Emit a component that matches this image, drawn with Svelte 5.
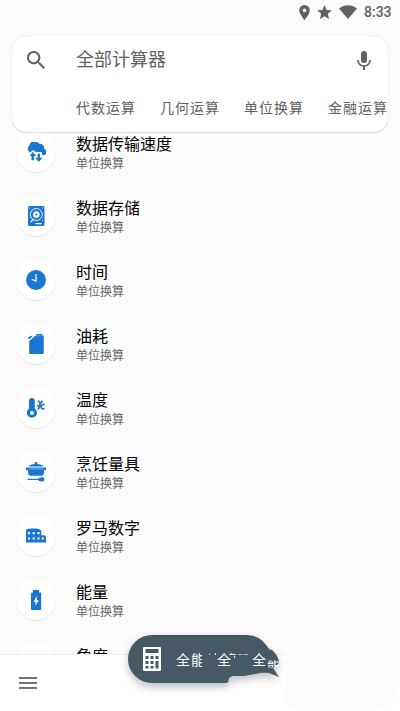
<script>
	const tabs = ['代数运算', '几何运算', '单位换算', '金融运算'];

	const items = [
		{ icon: 'cloud', name: '数据传输速度' },
		{ icon: 'disk', name: '数据存储' },
		{ icon: 'clock', name: '时间' },
		{ icon: 'fuel', name: '油耗' },
		{ icon: 'temp', name: '温度' },
		{ icon: 'pot', name: '烹饪量具' },
		{ icon: 'roman', name: '罗马数字' },
		{ icon: 'battery', name: '能量' },
		{ icon: 'angle', name: '角度' }
	];
</script>

<div class="screen">
	<header class="status">
		<svg class="pin" viewBox="5 2 14 20"><path d="M12 2a7 7 0 0 0-7 7c0 5.200 7 13 7 13s7-7.800 7-13a7 7 0 0 0-7-7Zm0 9.500a2.500 2.500 0 1 1 0-5 2.500 2.500 0 0 1 0 5Z" /></svg>
		<svg class="star" viewBox="2 2 20 19"><path d="m12 17.270 6.180 3.730-1.640-7.030L22 9.240l-7.190-.61L12 2 9.190 8.630 2 9.240l5.460 4.730L5.820 21Z" /></svg>
		<svg class="wifi" viewBox="0 0 18 14"><path d="M0 3.500C5-1 13-1 18 3.500L9 14Z" /></svg>
		<span>8:33</span>
	</header>

	<section class="search">
		<div class="field">
			<svg class="glass" viewBox="3 3 17.500 17.500"><path d="M15.500 14h-.79l-.28-.27A6.500 6.500 0 1 0 13.730 14.430l.27.28v.79l5 4.990L20.490 19Zm-6 0a4.500 4.500 0 1 1 0-9 4.500 4.500 0 0 1 0 9Z" /></svg>
			<span>全部计算器</span>
			<svg class="mic" viewBox="5 2 14 19"><path d="M12 14a3 3 0 0 0 3-3V5a3 3 0 0 0-6 0v6a3 3 0 0 0 3 3Zm5.300-3a5.300 5.300 0 0 1-10.600 0H5a7 7 0 0 0 6 6.720V21h2v-3.280A7 7 0 0 0 19 11Z" /></svg>
		</div>
		<nav class="tabs">
			{#each tabs as tab}
				<span>{tab}</span>
			{/each}
		</nav>
	</section>

	<main class="list">
		{#each items as item}
			<div class="row">
				<div class="badge">
					<svg viewBox="0 0 20 20">
						{#if item.icon === 'cloud'}
							<path d="M4.200 10.500A4 4 0 0 1 3.200 3.800 5.300 5.300 0 0 1 13 1.800a4.300 4.300 0 0 1 5 5 3.300 3.300 0 0 1 .5 6.200H16v-3h-6L7 7.900Z" />
							<path d="m6.800 10 3.400 4H8.100v4.200H5.500V14H3.400ZM11.600 11.800H14v4h2.500L12.800 20l-3.600-4.200h2.400Z" />
						{:else if item.icon === 'disk'}
							<rect x="2" y="0" width="16.500" height="20" rx="1.500" />
							<circle class="ring" cx="10.300" cy="8.500" r="6" />
							<circle class="hub" cx="10.300" cy="8.500" r="3.200" />
							<circle cx="10.300" cy="8.500" r="1.100" />
							<path class="arm" d="m4.800 16.200 2.600-3.400M9.500 17.600h6.200" />
							<path class="hole" d="M3.400 1.400h1v1h-1ZM16 1.400h1v1h-1ZM16 14h1v1h-1Z" />
						{:else if item.icon === 'clock'}
							<circle cx="10" cy="10" r="10" />
							<path class="hands" d="M10 4v7L5.600 9.200" />
						{:else if item.icon === 'fuel'}
							<path d="M3.200 7 9 2.100h1L10.600 0h5.300l.7 1.400h1.100V19q0 1-1 1H4.200q-1 0-1-1ZM1.800 4l3.200-2.600 1.200 1.300L3.200 5.300Z" />
							<path class="rim" d="M11 1.900h4.600" />
						{:else if item.icon === 'temp'}
							<path d="M3 2.800a2.900 2.900 0 0 1 5.800 0v7.600a5.100 5.100 0 1 1-5.800 0Z" />
							<circle class="hole" cx="5.900" cy="14.900" r="1.900" />
							<path class="line" d="m12 2.500 2.300 2.300L16.600 3M11 7.800h2.500l.8-3M18.600 6.500q-3.600-.8-3.600 2.500 0 2 3.500 1.800M12 11.500l1.500-2.500" />
						{:else if item.icon === 'pot'}
							<path d="M8.800 0h2.400v2q5 .2 6.400 2.600H2.400Q4 2.200 8.800 2ZM0 5.400h20v2.800h-2v2.500q0 3-3 3H5q-3 0-3-3V8.200H0Z" />
							<path d="M1.500 16.800H12q1.700-1.900 4.500-1.600 2 .5 2 2.300t-2 2.100q-2.500.2-4.500-1.500H1.500Z" />
							<path class="rim" d="M2.500 6.900h15" />
						{:else if item.icon === 'roman'}
							<path d="M0 5q0-2.400 5-2.400h5q4 .4 5.300 2.200v4.400h2.300q2.400.2 2.400 2v5.300H0Z" />
							<path class="windows" d="M2.900 6v2.300M7.700 6v2.300M12.500 6v2.300M2.900 11.500v2M7.700 11.500v2M12.500 11.500v2M16.800 11.500v2" />
						{:else if item.icon === 'battery'}
							<path d="M7 0h6v2.500h1.200q1 0 1 1V19q0 1-1 1H6q-1 0-1-1V3.500q0-1 1-1h1Z" />
							<path class="hole" d="m10.800 6-3.300 6h2v3.700l3.300-5.500h-2Z" />
						{:else}
							<path d="M11 1 19 20H2Z" />
						{/if}
					</svg>
				</div>
				<div class="text">
					<b>{item.name}</b>
					<small>单位换算</small>
				</div>
			</div>
		{/each}
	</main>

	<footer class="bottom">
		<svg viewBox="0 0 18 12"><path d="M0 0h18v2H0ZM0 5h18v2H0ZM0 10h18v2H0Z" /></svg>
	</footer>
	<div class="patch"></div>

	<svg class="fab" viewBox="118 625 172 76">
		<defs>
			<clipPath id="mid"><path d="M176 640h28v14h-2v14h-26Z" /></clipPath>
			<clipPath id="tops"><path d="M209 650h7v5h-7ZM229 650h7v8h-2v-3h-5ZM237 650h11v4.500h-11Z" /></clipPath>
			<clipPath id="tail"><path d="M267 660h12v7.500h-12Z" /></clipPath>
		</defs>
		<path class="shape" d="M152 635h95q12 0 20 11 2 4 5 4 5 4 7 11l-1 3-5 4 6 9-10-4q-6-1-14 1l-11 2h-12l-3 2-1 4.500q-2 .5-5 .5h-71a24 24 0 0 1 0-48Z" />
		<path class="calc" d="M143 648q0-1 1-1h16q1 0 1 1v22q0 1-1 1h-16q-1 0-1-1ZM145.500 649v4h13v-4ZM145.500 656v3h3v-3ZM150.500 656v3h3v-3ZM155.500 656v3h3v-3ZM145.500 661v3h3v-3ZM150.500 661v3h3v-3ZM155.500 661v7.500h3V661ZM145.500 666v2.500h3V666ZM150.500 666v2.500h3V666Z" />
		<text x="176" y="664.500" clip-path="url(#mid)">全能</text>
		<g clip-path="url(#tops)">
			<text x="206" y="664.500">计</text>
			<text x="223" y="664.500">算</text>
			<text x="236" y="664.500">器</text>
		</g>
		<text x="217" y="664.500">全</text>
		<text x="252" y="664.500">全</text>
		<text class="tiny" x="267" y="671" clip-path="url(#tail)">能</text>
	</svg>
</div>

<style>
	:global(body) { margin: 0; background: #fafafa; }

	.screen {
		position: relative;
		display: flex; flex-direction: column;
		width: 400px; height: 711px; overflow: hidden;
		background: #fbfbfb; color: #616161;
		font-family: Roboto, 'Noto Sans CJK SC', sans-serif;
	}
	svg { display: block; flex: none; fill: currentColor; }

	.status {
		display: flex; align-items: center; flex: none;
		height: 24px; box-sizing: border-box; padding: 0 8px 0 299px;
	}
	.status span { margin-left: 7px; font-size: 14px; font-weight: 500; line-height: 24px; }
	.pin { width: 11px; height: 15px; }
	.star { width: 15px; height: 14px; margin-left: 7px; }
	.wifi { width: 18px; height: 14px; margin-left: 7px; }

	.search {
		position: relative; z-index: 1; flex: none;
		box-sizing: border-box; width: 376px; height: 96px; margin: 12px 12px 0;
		overflow: hidden; border-radius: 14px;
		background: #fff; box-shadow: 0 0 1px rgba(0, 0, 0, 0.25), 0 1px 1px rgba(0, 0, 0, 0.1);
	}
	.field { display: flex; align-items: center; height: 48px; padding: 0 17px 0 15px; }
	.field span { flex: 1; margin-left: 31px; font-size: 18px; line-height: 24px; }
	.glass { width: 18px; height: 18px; }
	.mic { width: 14px; height: 19px; margin-top: 1px; }
	.tabs { display: flex; gap: 24px; height: 48px; padding-left: 64px; }
	.tabs span { flex: none; font-size: 14px; line-height: 48px; letter-spacing: 1px; }

	.list { flex: 1; min-height: 0; overflow: hidden; margin-top: -12px; }
	.row { display: flex; height: 64px; padding: 12px 16px 0; box-sizing: border-box; }
	.badge {
		display: grid; place-items: center;
		width: 40px; height: 40px; border-radius: 50%;
		background: #fff; color: #1976d2; box-shadow: 0 1px 1px rgba(0, 0, 0, 0.08);
	}
	.badge svg { width: 20px; height: 20px; }
	.text { display: flex; flex-direction: column; margin-left: 20px; }
	.text b { margin-top: 2px; color: #000; font-size: 16px; font-weight: 400; line-height: 22px; }
	.text small { color: #666; font-size: 12px; line-height: 16px; }
	.ring, .hands, .arm, .line, .windows, .rim { fill: none; stroke: #fff; }
	.ring { stroke-width: 0.9; }
	.hub { fill: #fff; }
	.hands, .arm { stroke-width: 1.2; }
	.line { stroke: #1976d2; stroke-width: 1.7; }
	.windows { stroke-width: 2; }
	.rim { stroke: #90bdea; stroke-width: 0.8; }
	.hole { fill: #fff; }

	.bottom {
		display: flex; align-items: center; flex: none;
		box-sizing: border-box; height: 57px; padding-left: 19px;
		border-top: 1px solid #f0f0f0; background: #fff; color: #757575;
	}
	.bottom svg { width: 18px; height: 12px; }
	.patch {
		position: absolute; left: 285px; top: 640px; width: 115px; height: 71px;
		border-radius: 0 0 32px 14px; background: #fbfbfb;
	}

	.fab {
		position: absolute; left: 118px; top: 625px;
		width: 172px; height: 76px; color: #fff;
		font-size: 14px; letter-spacing: 1px;
	}
	.fab .shape { fill: #455a64; filter: drop-shadow(0 4px 4px rgba(0, 0, 0, 0.25)); }
	.fab .calc { fill-rule: evenodd; }
	.fab .tiny { font-size: 13px; }
</style>
